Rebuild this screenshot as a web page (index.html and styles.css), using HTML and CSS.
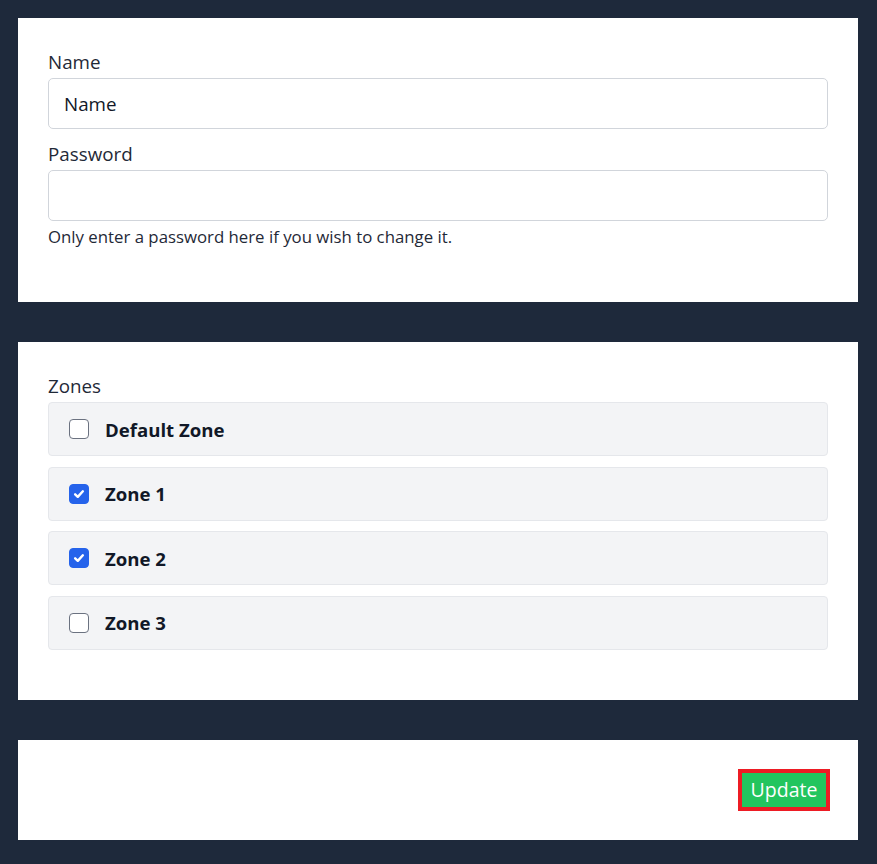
FILE: index.html
```html
<!DOCTYPE html>
<html lang="en">
<head>
<meta charset="utf-8">
<title>Edit user</title>
<link rel="stylesheet" href="styles.css">
</head>
<body>
<main class="page">
  <section class="card card-account">
    <div class="field">
      <label class="label" for="name">Name</label>
      <input class="input" id="name" type="text" value="Name">
    </div>
    <div class="field">
      <label class="label" for="password">Password</label>
      <input class="input" id="password" type="password">
      <p class="help">Only enter a password here if you wish to change it.</p>
    </div>
  </section>

  <section class="card card-zones">
    <div class="label">Zones</div>
    <div class="zone-list">
      <label class="zone">
        <span class="check"></span>
        <span class="zone-name">Default Zone</span>
      </label>
      <label class="zone">
        <span class="check checked"><svg viewBox="0 0 16 16" width="14" height="14"><path d="M3.6 8.4 L6.6 11.2 L12.4 4.9" fill="none" stroke="#fff" stroke-width="2.8" stroke-linecap="round" stroke-linejoin="round"/></svg></span>
        <span class="zone-name">Zone 1</span>
      </label>
      <label class="zone">
        <span class="check checked"><svg viewBox="0 0 16 16" width="14" height="14"><path d="M3.6 8.4 L6.6 11.2 L12.4 4.9" fill="none" stroke="#fff" stroke-width="2.8" stroke-linecap="round" stroke-linejoin="round"/></svg></span>
        <span class="zone-name">Zone 2</span>
      </label>
      <label class="zone">
        <span class="check"></span>
        <span class="zone-name">Zone 3</span>
      </label>
    </div>
  </section>

  <section class="card card-actions">
    <button class="btn-update" type="button">Update</button>
  </section>
</main>
</body>
</html>
```

FILE: styles.css
```css
* { box-sizing: border-box; }

html, body {
  margin: 0;
  background: #1e293b;
}

body {
  font-family: "Open Sans", "Noto Sans", sans-serif;
  color: #1f2937;
}

.page {
  padding: 18px 19px 18px 18px;
  display: flex;
  flex-direction: column;
  gap: 40px;
}

.card {
  background: #ffffff;
  padding: 30px;
}

.card-account {
  padding-bottom: 53px;
  display: flex;
  flex-direction: column;
  gap: 11px;
}

.field {
  display: flex;
  flex-direction: column;
}

.label {
  display: block;
  font-size: 18.8px;
  line-height: 28px;
  margin-bottom: 2px;
  color: #1f2937;
}

.input {
  height: 51px;
  width: 100%;
  border: 1px solid #d1d5db;
  border-radius: 5px;
  padding: 0 15px;
  font-family: inherit;
  font-size: 18.8px;
  color: #111827;
  background: #fff;
}

.help {
  margin: 4px 0 0;
  font-size: 16.8px;
  line-height: 24px;
  color: #1f2937;
}

.card-zones {
  padding-bottom: 50px;
}

.zone-list {
  display: flex;
  flex-direction: column;
  gap: 10.6px;
}

.zone {
  height: 54px;
  display: flex;
  align-items: center;
  gap: 16px;
  padding-left: 20px;
  background: #f3f4f6;
  border: 1px solid #e5e7eb;
  border-radius: 4px;
}

.check {
  width: 20px;
  height: 20px;
  border: 1.5px solid #6b7280;
  border-radius: 4px;
  background: #fff;
  display: flex;
  align-items: center;
  justify-content: center;
}

.check.checked {
  background: #2563eb;
  border-color: #2563eb;
}

.zone-name {
  font-size: 18.6px;
  font-weight: 700;
  color: #111827;
}

.card-actions {
  height: 100px;
  display: flex;
  align-items: center;
  justify-content: flex-end;
  padding: 0 32px 0 30px;
}

.btn-update {
  width: 84px;
  height: 34px;
  background: #22c55e;
  color: #fff;
  border: none;
  outline: 4.5px solid #ed1c24;
  font-family: inherit;
  font-size: 19.5px;
  padding: 0;
}
```
